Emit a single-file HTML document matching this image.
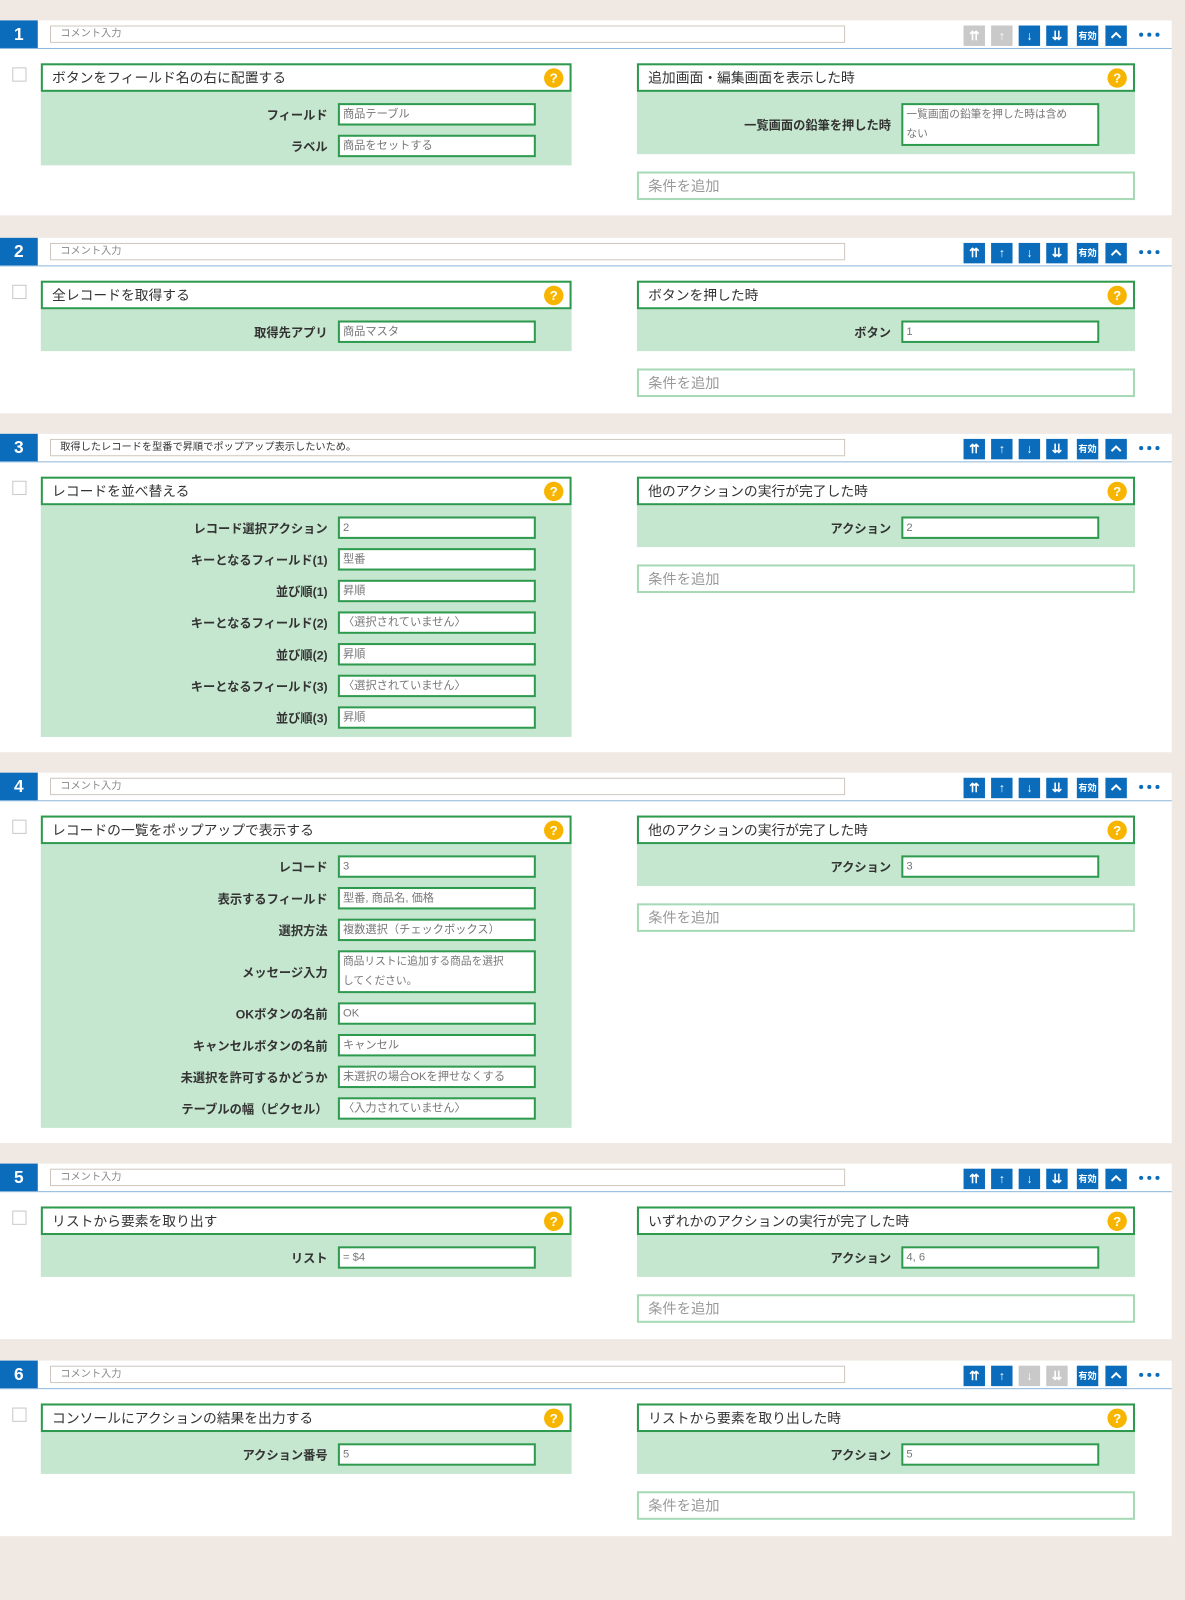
<!DOCTYPE html>
<html><head><meta charset="utf-8"><style>
*{box-sizing:border-box;margin:0;padding:0}
html,body{width:1185px;height:1600px;overflow:hidden;background:#efe8e3;font-family:"Liberation Sans","Noto Sans CJK JP",sans-serif}
#wrap{position:absolute;left:0;top:0;width:1161px;height:1568px;transform:scale(1.0207);transform-origin:0 0}
.blk{position:absolute;left:0;width:1148px;background:#fff}
.hd{position:absolute;left:0;top:0;width:1148px;height:28px;border-bottom:1px solid #8db7dc}
.num{position:absolute;left:0;top:0;width:37px;height:27px;background:#0b6cbc;color:#fff;font-weight:bold;font-size:17px;text-align:center;line-height:28px}
.cm{position:absolute;left:49px;top:5px;width:779px;height:17px;border:1px solid #cfc8bf;font-size:10px;color:#888;padding-left:9px;line-height:15px}
.cm.t{color:#333}
.ic{position:absolute;top:5px;width:21px;height:20px;background:#0b6cbc;color:#fff;font-size:12px;font-weight:bold;text-align:center;line-height:20px}
.ic.g{background:#c9c9c9}
.ic.s{font-size:9px}
.ic svg{display:block;margin:6px auto 0}
.dots{position:absolute;left:1116px;top:12px;width:22px;height:5px}
.dots i{position:absolute;top:0;width:4px;height:4px;border-radius:50%;background:#0b6cbc}
.cb{position:absolute;left:12px;top:46px;width:14px;height:14px;border:1px solid #c9c9c9}
.pn{position:absolute;top:42px}
.pl{left:40px;width:520px}
.pr{left:624px;width:488px}
.tt{height:28px;border:2px solid #2e9a4e;background:#fff;font-size:13.5px;color:#333;padding-left:9px;line-height:26px;position:relative}
.q{position:absolute;right:6px;top:3px;width:19px;height:19px;border-radius:50%;background:#f7b500;color:#fff;font-weight:bold;font-size:13px;text-align:center;line-height:19px}
.gr{background:#c5e6cf;padding:11px 0 8px}
.rw{display:flex;align-items:center;margin-bottom:9px;height:22px}
.rw:last-child{margin-bottom:0}
.rw.h{height:42px}
.lb{font-size:12px;font-weight:bold;color:#333;text-align:right}
.pl .lb{width:281px}
.pr .lb{width:249px}
.in{margin-left:10px;width:194px;height:22px;border:2px solid #2e9a4e;background:#fff;font-size:11px;color:#777;padding:0 3px;line-height:18px}
.rw.h .in{height:42px;line-height:19px;font-size:10.5px}
.cond{margin-top:17px;height:28px;border:2px solid #a7d9b6;font-size:14px;color:#999;padding-left:9px;line-height:24px}
</style></head><body><div id="wrap">

<!-- block 1 -->
<div class="blk" style="top:20px;height:191px">
<div class="hd"><div class="num">1</div><div class="cm">コメント入力</div>
<div class="ic g" style="left:944px">⇈</div><div class="ic g" style="left:971px">↑</div><div class="ic" style="left:998px">↓</div><div class="ic" style="left:1025px">⇊</div><div class="ic s" style="left:1055px">有効</div><div class="ic" style="left:1083px"><svg width="11" height="7" viewBox="0 0 11 7"><path d="M1 6L5.5 1.5L10 6" stroke="#fff" stroke-width="2" fill="none"/></svg></div><div class="dots"><i style="left:0"></i><i style="left:8px"></i><i style="left:16px"></i></div></div>
<div class="cb"></div>
<div class="pn pl"><div class="tt">ボタンをフィールド名の右に配置する<div class="q">?</div></div>
<div class="gr"><div class="rw"><div class="lb">フィールド</div><div class="in">商品テーブル</div></div><div class="rw"><div class="lb">ラベル</div><div class="in">商品をセットする</div></div></div></div>
<div class="pn pr"><div class="tt">追加画面・編集画面を表示した時<div class="q">?</div></div>
<div class="gr"><div class="rw h"><div class="lb">一覧画面の鉛筆を押した時</div><div class="in">一覧画面の鉛筆を押した時は含め<br>ない</div></div></div>
<div class="cond">条件を追加</div></div>
</div>

<!-- block 2 -->
<div class="blk" style="top:233px;height:172px">
<div class="hd"><div class="num">2</div><div class="cm">コメント入力</div>
<div class="ic" style="left:944px">⇈</div><div class="ic" style="left:971px">↑</div><div class="ic" style="left:998px">↓</div><div class="ic" style="left:1025px">⇊</div><div class="ic s" style="left:1055px">有効</div><div class="ic" style="left:1083px"><svg width="11" height="7" viewBox="0 0 11 7"><path d="M1 6L5.5 1.5L10 6" stroke="#fff" stroke-width="2" fill="none"/></svg></div><div class="dots"><i style="left:0"></i><i style="left:8px"></i><i style="left:16px"></i></div></div>
<div class="cb"></div>
<div class="pn pl"><div class="tt">全レコードを取得する<div class="q">?</div></div>
<div class="gr"><div class="rw"><div class="lb">取得先アプリ</div><div class="in">商品マスタ</div></div></div></div>
<div class="pn pr"><div class="tt">ボタンを押した時<div class="q">?</div></div>
<div class="gr"><div class="rw"><div class="lb">ボタン</div><div class="in">1</div></div></div>
<div class="cond">条件を追加</div></div>
</div>

<!-- block 3 -->
<div class="blk" style="top:425px;height:312px">
<div class="hd"><div class="num">3</div><div class="cm t">取得したレコードを型番で昇順でポップアップ表示したいため。</div>
<div class="ic" style="left:944px">⇈</div><div class="ic" style="left:971px">↑</div><div class="ic" style="left:998px">↓</div><div class="ic" style="left:1025px">⇊</div><div class="ic s" style="left:1055px">有効</div><div class="ic" style="left:1083px"><svg width="11" height="7" viewBox="0 0 11 7"><path d="M1 6L5.5 1.5L10 6" stroke="#fff" stroke-width="2" fill="none"/></svg></div><div class="dots"><i style="left:0"></i><i style="left:8px"></i><i style="left:16px"></i></div></div>
<div class="cb"></div>
<div class="pn pl"><div class="tt">レコードを並べ替える<div class="q">?</div></div>
<div class="gr">
<div class="rw"><div class="lb">レコード選択アクション</div><div class="in">2</div></div>
<div class="rw"><div class="lb">キーとなるフィールド(1)</div><div class="in">型番</div></div>
<div class="rw"><div class="lb">並び順(1)</div><div class="in">昇順</div></div>
<div class="rw"><div class="lb">キーとなるフィールド(2)</div><div class="in">〈選択されていません〉</div></div>
<div class="rw"><div class="lb">並び順(2)</div><div class="in">昇順</div></div>
<div class="rw"><div class="lb">キーとなるフィールド(3)</div><div class="in">〈選択されていません〉</div></div>
<div class="rw"><div class="lb">並び順(3)</div><div class="in">昇順</div></div>
</div></div>
<div class="pn pr"><div class="tt">他のアクションの実行が完了した時<div class="q">?</div></div>
<div class="gr"><div class="rw"><div class="lb">アクション</div><div class="in">2</div></div></div>
<div class="cond">条件を追加</div></div>
</div>

<!-- block 4 -->
<div class="blk" style="top:757px;height:363px">
<div class="hd"><div class="num">4</div><div class="cm">コメント入力</div>
<div class="ic" style="left:944px">⇈</div><div class="ic" style="left:971px">↑</div><div class="ic" style="left:998px">↓</div><div class="ic" style="left:1025px">⇊</div><div class="ic s" style="left:1055px">有効</div><div class="ic" style="left:1083px"><svg width="11" height="7" viewBox="0 0 11 7"><path d="M1 6L5.5 1.5L10 6" stroke="#fff" stroke-width="2" fill="none"/></svg></div><div class="dots"><i style="left:0"></i><i style="left:8px"></i><i style="left:16px"></i></div></div>
<div class="cb"></div>
<div class="pn pl"><div class="tt">レコードの一覧をポップアップで表示する<div class="q">?</div></div>
<div class="gr">
<div class="rw"><div class="lb">レコード</div><div class="in">3</div></div>
<div class="rw"><div class="lb">表示するフィールド</div><div class="in">型番, 商品名, 価格</div></div>
<div class="rw"><div class="lb">選択方法</div><div class="in">複数選択（チェックボックス）</div></div>
<div class="rw h"><div class="lb">メッセージ入力</div><div class="in">商品リストに追加する商品を選択<br>してください。</div></div>
<div class="rw"><div class="lb">OKボタンの名前</div><div class="in">OK</div></div>
<div class="rw"><div class="lb">キャンセルボタンの名前</div><div class="in">キャンセル</div></div>
<div class="rw"><div class="lb">未選択を許可するかどうか</div><div class="in">未選択の場合OKを押せなくする</div></div>
<div class="rw"><div class="lb">テーブルの幅（ピクセル）</div><div class="in">〈入力されていません〉</div></div>
</div></div>
<div class="pn pr"><div class="tt">他のアクションの実行が完了した時<div class="q">?</div></div>
<div class="gr"><div class="rw"><div class="lb">アクション</div><div class="in">3</div></div></div>
<div class="cond">条件を追加</div></div>
</div>

<!-- block 5 -->
<div class="blk" style="top:1140px;height:172px">
<div class="hd"><div class="num">5</div><div class="cm">コメント入力</div>
<div class="ic" style="left:944px">⇈</div><div class="ic" style="left:971px">↑</div><div class="ic" style="left:998px">↓</div><div class="ic" style="left:1025px">⇊</div><div class="ic s" style="left:1055px">有効</div><div class="ic" style="left:1083px"><svg width="11" height="7" viewBox="0 0 11 7"><path d="M1 6L5.5 1.5L10 6" stroke="#fff" stroke-width="2" fill="none"/></svg></div><div class="dots"><i style="left:0"></i><i style="left:8px"></i><i style="left:16px"></i></div></div>
<div class="cb"></div>
<div class="pn pl"><div class="tt">リストから要素を取り出す<div class="q">?</div></div>
<div class="gr"><div class="rw"><div class="lb">リスト</div><div class="in">= $4</div></div></div></div>
<div class="pn pr"><div class="tt">いずれかのアクションの実行が完了した時<div class="q">?</div></div>
<div class="gr"><div class="rw"><div class="lb">アクション</div><div class="in">4, 6</div></div></div>
<div class="cond">条件を追加</div></div>
</div>

<!-- block 6 -->
<div class="blk" style="top:1333px;height:172px">
<div class="hd"><div class="num">6</div><div class="cm">コメント入力</div>
<div class="ic" style="left:944px">⇈</div><div class="ic" style="left:971px">↑</div><div class="ic g" style="left:998px">↓</div><div class="ic g" style="left:1025px">⇊</div><div class="ic s" style="left:1055px">有効</div><div class="ic" style="left:1083px"><svg width="11" height="7" viewBox="0 0 11 7"><path d="M1 6L5.5 1.5L10 6" stroke="#fff" stroke-width="2" fill="none"/></svg></div><div class="dots"><i style="left:0"></i><i style="left:8px"></i><i style="left:16px"></i></div></div>
<div class="cb"></div>
<div class="pn pl"><div class="tt">コンソールにアクションの結果を出力する<div class="q">?</div></div>
<div class="gr"><div class="rw"><div class="lb">アクション番号</div><div class="in">5</div></div></div></div>
<div class="pn pr"><div class="tt">リストから要素を取り出した時<div class="q">?</div></div>
<div class="gr"><div class="rw"><div class="lb">アクション</div><div class="in">5</div></div></div>
<div class="cond">条件を追加</div></div>
</div>

</div></body></html>
